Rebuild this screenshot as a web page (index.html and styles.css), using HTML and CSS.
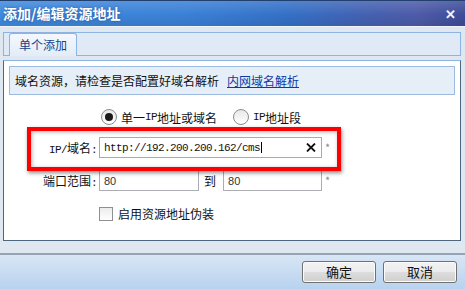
FILE: index.html
```html
<!DOCTYPE html>
<html lang="zh-CN">
<head>
  <meta charset="UTF-8">
  <title>添加/编辑资源地址</title>
  <link rel="stylesheet" href="styles.css">
</head>
<body>
  <div class="dialog">
    <div class="titlebar">
      <span class="title">添加/编辑资源地址</span>
      <span class="close">&#x2715;</span>
    </div>

    <div class="tabstrip">
      <div class="tab">单个添加</div>
    </div>

    <div class="panel">
      <div class="notice">域名资源，请检查是否配置好域名解析<a href="#">内网域名解析</a></div>

      <div class="row radios">
        <label class="radio"><span class="dot checked"></span>单一<span class="lat">IP</span>地址或域名</label>
        <label class="radio"><span class="dot"></span><span class="lat">IP</span>地址段</label>
      </div>

      <div class="row row-ip">
        <span class="label"><span class="lat">IP/</span>域名<span class="lat">:</span></span>
        <div class="field url">
          <span class="value">http://192.200.200.162/cms</span><span class="caret"></span>
          <svg class="clear" width="10" height="9" viewBox="0 0 10 9"><path d="M1 0.5 L9 8.5 M9 0.5 L1 8.5" stroke="#111" stroke-width="1.8"/></svg>
        </div>
        <span class="req">*</span>
      </div>

      <div class="row row-port">
        <span class="label">端口范围<span class="lat">:</span></span>
        <div class="field port-from"><span class="num">80</span></div>
        <span class="to">到</span>
        <div class="field port-to"><span class="num">80</span></div>
        <span class="req">*</span>
      </div>

      <div class="row row-check">
        <label class="check"><span class="box"></span>启用资源地址伪装</label>
      </div>
    </div>

    <div class="gap"></div>

    <div class="footer">
      <button class="btn">确定</button>
      <button class="btn">取消</button>
    </div>
  </div>

  <!-- annotation frame drawn over the form -->
  <div class="highlight"></div>
</body>
</html>
```

FILE: styles.css
```css
body { margin: 0; width: 465px; height: 289px; overflow: hidden; background: #dfe7f0; font-family: "Noto Sans CJK SC", sans-serif; font-size: 12px; color: #111; position: relative; }
.dialog { display: flex; flex-direction: column; height: 289px; }

.titlebar { height: 27px; box-sizing: border-box; border-top: 1px solid #21406f; display: flex; align-items: center; justify-content: space-between; padding: 0 9px 1px 3px;
  background: linear-gradient(to bottom, rgba(255,255,255,0.14), rgba(255,255,255,0) 55%, rgba(0,0,0,0.08)),
              linear-gradient(to right, #3f8ade 0%, #3a80d6 40%, #3470c6 62%, #4560b0 80%, #4d5ba8 90%, #3d4c98 100%);
  border-bottom: 1px solid #f1f5fa; }
.title { color: #fff; font-weight: bold; font-size: 14px; text-shadow: 0 0 3px rgba(20,40,90,0.5); line-height: 1; }
.close { color: #f4f6fb; font-size: 13px; font-weight: bold; line-height: 1; }

.tabstrip { margin: 5px 4px 0 3px; height: 24px; box-sizing: border-box; border: 1px solid #8db3e2; background: #e0eaf7; display: flex; align-items: flex-end; padding-left: 5px; }
.tab { width: 68px; height: 23px; box-sizing: border-box; margin-bottom: -1px; border: 1px solid #8db3e2; border-bottom: none; border-radius: 3px 3px 0 0; background: linear-gradient(#f4f8fd, #e3ecf8); color: #15428b; text-align: center; line-height: 21px; font-size: 12px; }

.panel { margin: 4px 4px 0 3px; height: 181px; box-sizing: border-box; background: #fff; border: 1px solid #4e6781; border-top-color: #8db3e2; padding: 5px 5px 0 0; }
.notice { margin-left: 5px; height: 29px; box-sizing: border-box; border: 1px solid #9dbbe0; background: #e6eef8; padding-left: 5px; display: flex; align-items: center; }
.notice a { color: #0d3aa6; text-decoration: underline; margin-left: 8px; }

.lat { font-family: "Liberation Mono", monospace; font-size: 11px; letter-spacing: -0.6px; }

.row { display: flex; align-items: center; }
.radios { margin-top: 12px; height: 20px; padding-left: 97px; }
.radio { display: flex; align-items: center; margin-right: 16px; }
.dot { width: 14px; height: 14px; border: 1px solid #8a8c8e; border-radius: 50%; background: linear-gradient(#e8e8e8, #fff); margin-right: 4px; position: relative; }
.dot.checked::after { content: ""; position: absolute; left: 3px; top: 3px; width: 8px; height: 8px; border-radius: 50%; background: #1a1a1a; }

.label { width: 93px; text-align: right; }
.field { height: 21px; box-sizing: border-box; border: 1px solid #abadb3; background: #fff; margin-left: 2px; display: flex; align-items: center; padding-left: 4px; }
.row-ip { margin-top: 10px; height: 21px; }
.url { width: 223px; border-color: #7eb4ea; position: relative; }
.value { font-family: "Liberation Mono", monospace; font-size: 11px; letter-spacing: -0.6px; }
.caret { width: 1px; height: 11px; background: #000; margin-left: 1px; }
.clear { position: absolute; right: 5px; top: 5px; }
.req { color: #8a8a8a; font-size: 11px; margin-left: 3px; margin-top: -2px; }

.row-port { margin-top: 12px; height: 21px; }
.port-from { width: 100px; }
.port-to { width: 99px; margin-left: 7px; }
.to { margin-left: 5px; }
.num { font-family: "Liberation Sans", sans-serif; font-size: 11px; color: #333; }

.row-check { margin-top: 14px; padding-left: 95px; }
.check { display: flex; align-items: center; }
.box { width: 12px; height: 12px; border: 1px solid #8e8f8f; background: linear-gradient(#ececec, #fff); margin-right: 5px; }

.gap { height: 12px; }
.footer { flex: 1; border-top: 2px solid #96a5b6; background: linear-gradient(#d8e6f5, #b8d2ef); display: flex; justify-content: flex-end; align-items: flex-start; padding: 6px 8px 0 0; gap: 7px; }
.btn { width: 74px; height: 22px; border: 1px solid #707070; border-radius: 3px; box-shadow: inset 0 0 0 1px #fbfbfb; background: linear-gradient(#f2f2f2 0%, #ebebeb 50%, #dddddd 50%, #cfcfcf 100%); font-family: "Noto Sans CJK SC", sans-serif; font-size: 13px; color: #111; padding: 0; line-height: 18px; }

.highlight { position: absolute; left: 27px; top: 127px; width: 314px; height: 44px; box-sizing: border-box; border: 4px solid #f00; box-shadow: 1px 2px 4px rgba(0,0,0,0.45), inset 1px 1px 4px rgba(0,0,0,0.3); }
```
